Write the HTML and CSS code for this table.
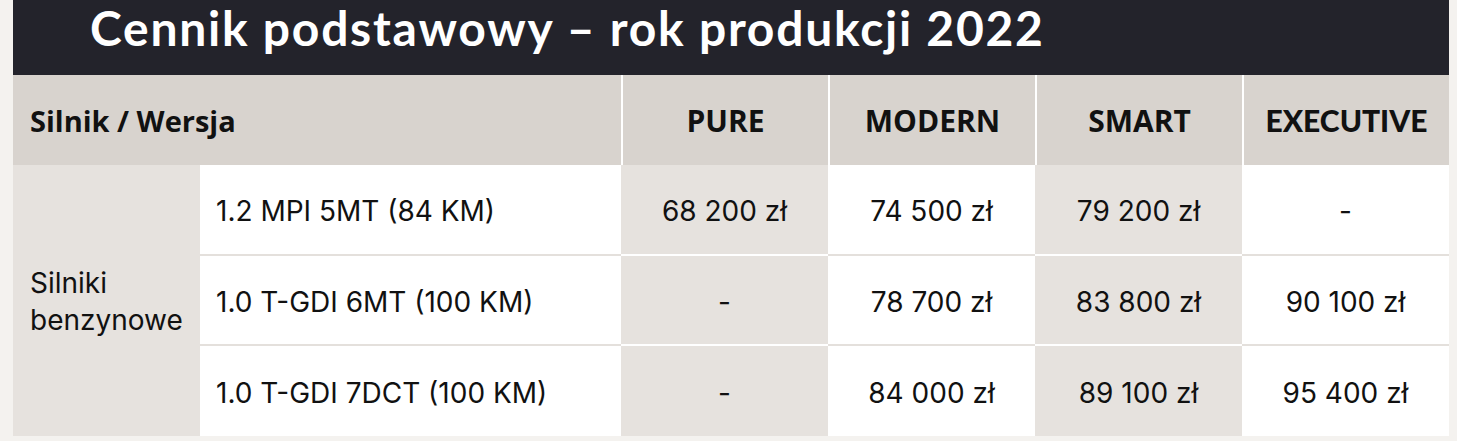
FILE: index.html
```html
<!DOCTYPE html>
<html lang="pl">
<head>
<meta charset="utf-8">
<title>Cennik</title>
<link rel="stylesheet" href="styles.css">
</head>
<body>
<div class="page">
  <div class="banner"><h1 class="title">Cennik podstawowy – rok produkcji 2022</h1></div>
  <div class="table">
    <div class="cell head span2 left">Silnik / Wersja</div>
    <div class="cell head">PURE</div>
    <div class="cell head">MODERN</div>
    <div class="cell head">SMART</div>
    <div class="cell head exec">EXECUTIVE</div>

    <div class="cell group">Silniki<br>benzynowe</div>

    <div class="cell eng">1.2 MPI 5MT (84 KM)</div>
    <div class="cell shade">68 200 zł</div>
    <div class="cell">74 500 zł</div>
    <div class="cell shade">79 200 zł</div>
    <div class="cell">-</div>

    <div class="cell eng">1.0 T-GDI 6MT (100 KM)</div>
    <div class="cell shade">-</div>
    <div class="cell">78 700 zł</div>
    <div class="cell shade">83 800 zł</div>
    <div class="cell">90 100 zł</div>

    <div class="cell eng last">1.0 T-GDI 7DCT (100 KM)</div>
    <div class="cell shade last">-</div>
    <div class="cell last">84 000 zł</div>
    <div class="cell shade last">89 100 zł</div>
    <div class="cell last">95 400 zł</div>
  </div>
</div>
</body>
</html>
```
FILE: styles.css
```css
html, body {
  margin: 0;
  padding: 0;
  background: #f4f2ef;
}
.page {
  width: 1436px;
  margin-left: 13px;
}
.banner {
  height: 75px;
  background: #23232b;
  overflow: hidden;
}
.title {
  margin: 0;
  padding-left: 77px;
  padding-top: 2px;
  color: #ffffff;
  font-family: Lato, "Open Sans", sans-serif;
  font-weight: 700;
  font-size: 48px;
  line-height: 52px;
  letter-spacing: 1.75px;
  white-space: nowrap;
}
.table {
  display: grid;
  grid-template-columns: 187px 421px 207px 207px 207px 207px;
  grid-template-rows: 90px 91px 90px 90px;
  font-family: Inter, "Open Sans", sans-serif;
  color: #111111;
}
.cell {
  display: flex;
  align-items: center;
  justify-content: center;
  background: #ffffff;
  font-size: 28px;
  border-bottom: 2px solid #e4e0dc;
  box-sizing: border-box;
  padding-top: 3px;
}
.cell.shade {
  background: #e6e2de;
  border-bottom-color: #ffffff;
}
.cell.last {
  border-bottom: none;
}
.head {
  background: #d8d3ce;
  font-family: "Open Sans", sans-serif;
  font-weight: 700;
  font-size: 30px;
  border-bottom: none;
  border-left: 2px solid #ffffff;
  padding-top: 0;
}
.head.span2 {
  grid-column: span 2;
  border-left: none;
  justify-content: flex-start;
  padding-left: 17px;
  font-size: 29px;
}
.head.exec {
  font-family: Lato, sans-serif;
  font-weight: 900;
}
.group {
  grid-row: span 3;
  background: #e6e2de;
  justify-content: flex-start;
  padding-left: 17px;
  line-height: 37px;
  border-bottom: none;
}
.eng {
  justify-content: flex-start;
  padding-left: 16px;
}
```
